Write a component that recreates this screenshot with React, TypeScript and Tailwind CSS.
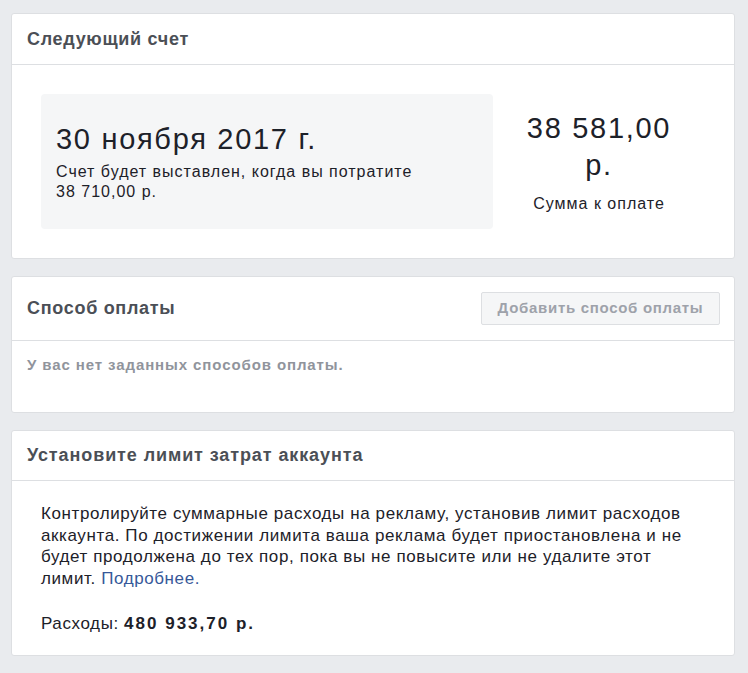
export default function App() {
  const font = { fontFamily: '"Liberation Sans", Arial, sans-serif' };
  return (
    <div className="min-h-[673px] bg-[#e9ebee] pl-[11px] pt-[13px] pb-[18px]" style={font}>
      <div className="flex w-[724px] flex-col gap-[17px]">
        {/* Next bill */}
        <section className="rounded-[3px] border border-[#dddfe2] bg-white">
          <div className="flex h-[51px] items-center border-b border-[#dddfe2] px-[15px]">
            <h2 className="text-[18px] font-bold tracking-[0.7px] text-[#4b4f56]">Следующий счет</h2>
          </div>
          <div className="flex px-[29px] py-[29px]">
            <div className="flex h-[135px] w-[452px] flex-col justify-center rounded-[4px] bg-[#f5f6f7] px-[15px]">
              <div className="text-[29px] leading-[34px] tracking-[1.7px] text-[#1d2129]">30 ноября 2017 г.</div>
              <p className="mt-[6px] text-[16px] leading-[20px] tracking-[1px] text-[#1d2129]">
                Счет будет выставлен, когда вы потратите
                <br />
                38 710,00 р.
              </p>
            </div>
            <div className="flex flex-1 flex-col items-center justify-center text-center">
              <div className="text-[29px] leading-[37px] tracking-[1.7px] text-[#1d2129]">
                38 581,00
                <br />
                р.
              </div>
              <div className="mt-[10px] text-[16px] leading-[20px] tracking-[1px] text-[#1d2129]">Сумма к оплате</div>
            </div>
          </div>
        </section>

        {/* Payment method */}
        <section className="rounded-[3px] border border-[#dddfe2] bg-white">
          <div className="flex h-[64px] items-center justify-between border-b border-[#dddfe2] pl-[15px] pr-[14px]">
            <h2 className="text-[18px] font-bold tracking-[0.7px] text-[#4b4f56]">Способ оплаты</h2>
            <button className="h-[33px] w-[239px] rounded-[2px] border border-[#dddfe2] bg-[#f5f6f7] text-[15px] font-bold tracking-[0.7px] text-[#9ea2aa]">
              Добавить способ оплаты
            </button>
          </div>
          <div className="px-[15px] pb-[38px] pt-[15px]">
            <p className="text-[15px] font-bold leading-[18px] tracking-[0.9px] text-[#90949c]">
              У вас нет заданных способов оплаты.
            </p>
          </div>
        </section>

        {/* Spend limit */}
        <section className="rounded-[3px] border border-[#dddfe2] bg-white">
          <div className="flex h-[50px] items-center border-b border-[#dddfe2] px-[15px]">
            <h2 className="text-[18px] font-bold tracking-[0.9px] text-[#4b4f56]">Установите лимит затрат аккаунта</h2>
          </div>
          <div className="px-[29px] pb-[21px] pt-[22px] text-[17px] leading-[21px] tracking-[0.6px] text-[#1d2129]">
            <p className="leading-[21.5px]">
              Контролируйте суммарные расходы на рекламу, установив лимит расходов аккаунта. По достижении
              лимита ваша реклама будет приостановлена и не будет продолжена до тех пор, пока вы не повысите
              или не удалите этот лимит. <a className="text-[#365899]">Подробнее.</a>
            </p>
            <p className="mt-[24px]">
              Расходы: <span className="font-bold tracking-[2px]">480 933,70 р.</span>
            </p>
          </div>
        </section>
      </div>
    </div>
  );
}
